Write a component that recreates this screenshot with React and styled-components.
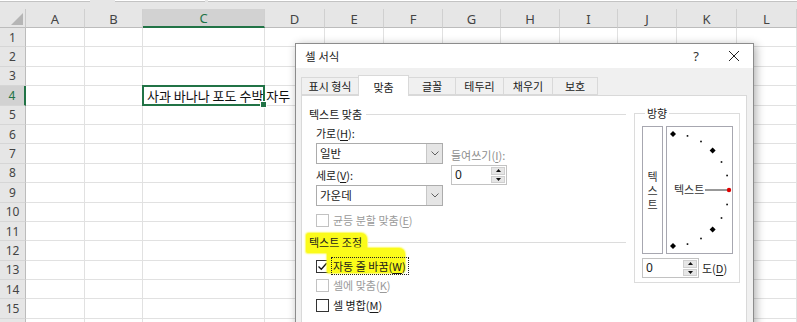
import React from 'react';
import styled, { createGlobalStyle } from 'styled-components';

const GlobalStyle = createGlobalStyle`
  html, body { margin: 0; padding: 0; background: #ffffff; }
  body { overflow: hidden; font-family: "Noto Sans CJK KR", "Noto Sans", sans-serif; }
`;

const COLUMNS = [
  { id: 'A', w: 59 }, { id: 'B', w: 58 }, { id: 'C', w: 122 }, { id: 'D', w: 60 },
  { id: 'E', w: 59 }, { id: 'F', w: 59 }, { id: 'G', w: 58 }, { id: 'H', w: 59 },
  { id: 'I', w: 58 }, { id: 'J', w: 59 }, { id: 'K', w: 60 }, { id: 'L', w: 60 },
];
const ROWS = Array.from({ length: 16 }, (_, i) => i + 1);
const ACTIVE_COL = 'C';
const ACTIVE_ROW = 4;
const GREEN = '#217346';

const Page = styled.div`
  position: relative;
  width: 797px;
  height: 322px;
  overflow: hidden;
  background: #fff;
`;

const FormulaStrip = styled.div`
  display: flex;
  height: 9px;
  background: #e6e6e6;
`;

const FormulaBox = styled.div`
  height: 1px;
  width: ${p => p.$w}px;
  margin-left: ${p => p.$ml || 0}px;
  background: #fff;
  border-bottom: 1px solid #c3c3c3;
`;

const Sheet = styled.div`
  display: grid;
  grid-template-columns: 26px ${COLUMNS.map(c => `${c.w}px`).join(' ')};
  grid-template-rows: 19px repeat(16, 19.4px);
`;

const Corner = styled.div`
  position: relative;
  box-sizing: border-box;
  background: #e6e6e6;
  border-right: 1px solid #c8c8c8;
  border-bottom: 1px solid #bcbcbc;
  &::after {
    content: '';
    position: absolute;
    right: 2px;
    bottom: 2px;
    border-left: 12px solid transparent;
    border-bottom: 12px solid #b5b5b5;
  }
`;

const ColHead = styled.div`
  box-sizing: border-box;
  display: flex;
  align-items: center;
  justify-content: center;
  background: ${p => (p.$active ? '#d2d2d2' : '#e6e6e6')};
  color: ${p => (p.$active ? GREEN : '#444')};
  border-right: 1px solid #d0d0d0;
  border-bottom: ${p => (p.$active ? `2px solid ${GREEN}` : '1px solid #bcbcbc')};
  font: 13px "Noto Sans", sans-serif;
  padding-top: 1px;
`;

const RowHead = styled.div`
  box-sizing: border-box;
  display: flex;
  align-items: center;
  justify-content: center;
  background: ${p => (p.$active ? '#d2d2d2' : '#e6e6e6')};
  color: ${p => (p.$active ? GREEN : '#444')};
  border-right: ${p => (p.$active ? `2px solid ${GREEN}` : '1px solid #bcbcbc')};
  border-bottom: 1px solid #d6d6d6;
  font: 12px "Noto Sans", sans-serif;
`;

const Cell = styled.div`
  position: relative;
  box-sizing: border-box;
  display: flex;
  align-items: center;
  border-right: 1px solid #e1e1e1;
  border-bottom: 1px solid #e1e1e1;
`;

const CellText = styled.span`
  position: relative;
  z-index: 1;
  padding-left: 4px;
  white-space: nowrap;
  font: 13px "Noto Sans CJK KR", sans-serif;
  color: #111;
`;

const Selection = styled.div`
  position: absolute;
  top: -1px;
  left: -1px;
  right: -1px;
  bottom: -1px;
  border: 2px solid ${GREEN};
  z-index: 2;
`;

const FillHandle = styled.div`
  position: absolute;
  right: -4px;
  bottom: -4px;
  width: 5px;
  height: 5px;
  background: ${GREEN};
  border: 1px solid #fff;
`;

/* ---------- dialog ---------- */

const Dialog = styled.div`
  position: absolute;
  left: 295px;
  top: 43px;
  width: 459px;
  height: 300px;
  box-sizing: border-box;
  display: flex;
  flex-direction: column;
  background: #f0f0f0;
  border: 1px solid #8c8c8c;
  box-shadow: 2px 2px 9px rgba(0, 0, 0, 0.32);
  font-family: "Noto Sans CJK KR", sans-serif;
  font-size: 11px;
  color: #1a1a1a;
  z-index: 10;
`;

const TitleBar = styled.div`
  display: flex;
  align-items: center;
  height: 24px;
  background: #fff;
  padding-left: 9px;
  padding-right: 4px;
  column-gap: 8px;
`;

const Title = styled.div`
  flex: 1;
  line-height: 16px;
  font-size: 11.5px;
  color: #222;
`;

const TitleButton = styled.div`
  width: 30px;
  height: 24px;
  display: flex;
  align-items: center;
  justify-content: center;
  font: 13px "Noto Sans", sans-serif;
  color: #333;
`;

const Body = styled.div`
  flex: 1;
  display: flex;
  flex-direction: column;
  padding: 7px 6px 0 5px;
`;

const Tabs = styled.div`
  display: flex;
  align-items: flex-end;
  height: 20px;
  position: relative;
  z-index: 1;
`;

const Tab = styled.div`
  box-sizing: border-box;
  width: ${p => p.$w}px;
  height: ${p => (p.$selected ? 21 : 18)}px;
  margin-left: ${p => (p.$first ? 0 : -1)}px;
  margin-bottom: ${p => (p.$selected ? -1 : 0)}px;
  display: flex;
  align-items: center;
  justify-content: center;
  background: ${p => (p.$selected ? '#fff' : '#f0f0f0')};
  border: 1px solid #d9d9d9;
  border-bottom: ${p => (p.$selected ? 'none' : '1px solid #d9d9d9')};
  position: relative;
  z-index: ${p => (p.$selected ? 2 : 1)};
  line-height: 16px;
  padding-top: ${p => (p.$selected ? 1 : 0)}px;
`;

const Panel = styled.div`
  flex: 1;
  display: flex;
  background: #fff;
  border: 1px solid #d9d9d9;
`;

const LeftCol = styled.div`
  width: 324px;
  box-sizing: border-box;
  padding-left: 7px;
  display: flex;
  flex-direction: column;
`;

const GroupTitle = styled.div`
  display: flex;
  align-items: center;
  height: 16px;
  margin-top: ${p => p.$mt}px;
  line-height: 16px;
  color: #1a1a1a;
`;

const GroupLine = styled.div`
  flex: 1;
  height: 1px;
  background: #dcdcdc;
  margin-left: ${p => p.$ml || 4}px;
`;

const Marker = styled.span`
  position: relative;
  z-index: 0;
  &::before {
    content: '';
    position: absolute;
    z-index: -1;
    top: ${p => p.$top}px;
    left: ${p => p.$left}px;
    right: ${p => p.$right}px;
    bottom: ${p => p.$bottom}px;
    background: #fbfb1a;
    border-radius: 3px 6px 4px 2px;
    box-shadow: 0 0 1.5px 1px rgba(250, 250, 30, 0.7);
  }
`;

const Indent = styled.div`
  padding-left: 7px;
  display: flex;
  flex-direction: column;
`;

const AlignGrid = styled.div`
  display: grid;
  grid-template-columns: 127px 56px;
  column-gap: 8px;
  margin-top: 3px;
`;

const Stack = styled.div`
  display: flex;
  flex-direction: column;
  padding-top: ${p => p.$pt || 0}px;
`;

const Label = styled.div`
  height: 16px;
  line-height: 16px;
  margin-top: ${p => p.$mt || 0}px;
  color: ${p => (p.$disabled ? '#8d8d8d' : '#1a1a1a')};
  white-space: nowrap;
`;

const Key = styled.span`
  text-decoration: underline;
  text-underline-offset: 2px;
`;

const Select = styled.div`
  box-sizing: border-box;
  height: 21px;
  margin-top: 2px;
  display: flex;
  border: 1px solid #acacac;
  background: #fff;
`;

const SelectValue = styled.div`
  flex: 1;
  padding-left: 3px;
  line-height: 18px;
  font-size: 11.5px;
`;

const SelectButton = styled.div`
  width: 15px;
  display: flex;
  align-items: center;
  justify-content: center;
  background: #e5e5e5;
  border-left: 1px solid #c7c7c7;
`;

const Spinner = styled.div`
  box-sizing: border-box;
  width: ${p => p.$w}px;
  height: 20px;
  margin-top: ${p => p.$mt || 0}px;
  display: flex;
  border: 1px solid #c2c2c2;
  background: #fff;
`;

const SpinValue = styled.div`
  flex: 1;
  padding-left: 3px;
  line-height: 18px;
  font-family: "Noto Sans", sans-serif;
  font-size: 12px;
`;

const SpinButtons = styled.div`
  width: 14px;
  display: flex;
  flex-direction: column;
  padding: 1px;
  gap: 1px;
`;

const SpinButton = styled.div`
  flex: 1;
  display: flex;
  align-items: center;
  justify-content: center;
  background: #e6e6e6;
  border: 1px solid #cfcfcf;
`;

const CheckRow = styled.div`
  display: flex;
  align-items: center;
  height: 14px;
  margin-top: ${p => p.$mt}px;
  column-gap: 4px;
  color: ${p => (p.$disabled ? '#9a9a9a' : '#1a1a1a')};
  white-space: nowrap;
  line-height: 14px;
`;

const CheckBox = styled.div`
  box-sizing: border-box;
  width: 13px;
  height: 13px;
  background: #fff;
  border: 1px solid ${p => (p.$disabled ? '#c2c2c2' : '#333')};
  display: flex;
  align-items: center;
  justify-content: center;
`;

const FocusText = styled.span`
  outline: 1px dotted #222;
  outline-offset: 0px;
  padding: 0 2px 0 1px;
  margin-left: -1px;
`;

const Orientation = styled.fieldset`
  margin: 9px 0 0 8px;
  padding: 0 0 4px 7px;
  width: 106px;
  height: 178px;
  box-sizing: border-box;
  border: 1px solid #dcdcdc;
  min-width: 0;
`;

const Legend = styled.legend`
  padding: 0 2px;
  margin-left: 3px;
  line-height: 16px;
  color: #1a1a1a;
`;

const DialRow = styled.div`
  display: flex;
  column-gap: 3px;
  margin-top: 5px;
`;

const VerticalBox = styled.div`
  box-sizing: border-box;
  width: 21px;
  height: 128px;
  border: 1px solid #a7a7b0;
  background: #fff;
  display: flex;
  align-items: center;
  justify-content: center;
  color: #333;
`;

const VerticalText = styled.span`
  writing-mode: vertical-rl;
  text-orientation: upright;
  letter-spacing: 3px;
  line-height: 14px;
  padding-top: 3px;
`;

const DialBox = styled.div`
  box-sizing: border-box;
  width: 67px;
  height: 128px;
  border: 1px solid #a7a7b0;
  background: #fff;
`;

const DegreeRow = styled.div`
  display: flex;
  align-items: center;
  margin-top: 4px;
  column-gap: 3px;
`;

const Chevron = () => (
  <svg width="8" height="5" viewBox="0 0 8 5">
    <path d="M0.5 0.5 L4 4 L7.5 0.5" fill="none" stroke="#606060" strokeWidth="1" />
  </svg>
);

const Arrow = ({ down }) => (
  <svg width="5" height="3" viewBox="0 0 5 3">
    <path d={down ? 'M0 0 L5 0 L2.5 3 Z' : 'M0 3 L5 3 L2.5 0 Z'} fill="#111" />
  </svg>
);

const SpinBox = ({ w, mt, value }) => (
  <Spinner $w={w} $mt={mt}>
    <SpinValue>{value}</SpinValue>
    <SpinButtons>
      <SpinButton><Arrow /></SpinButton>
      <SpinButton><Arrow down /></SpinButton>
    </SpinButtons>
  </Spinner>
);

const CheckMark = () => (
  <svg width="11" height="11" viewBox="0 0 11 11">
    <path d="M1.5 5.5 L4.3 8.3 L9.6 2.2" fill="none" stroke="#111" strokeWidth="1.3" />
  </svg>
);

const Dial = () => {
  const cx = 6;
  const cy = 63;
  const r = 56;
  const dots = Array.from({ length: 13 }, (_, i) => -90 + i * 15);
  return (
    <svg width="65" height="126" viewBox="0 0 65 126">
      {dots.map(a => {
        const rad = (a * Math.PI) / 180;
        const x = cx + r * Math.cos(rad);
        const y = cy + r * Math.sin(rad);
        if (a === 0) return <circle key={a} cx={x} cy={y} r="2.2" fill="#e00000" />;
        const big = Math.abs(a) === 90 || Math.abs(a) === 45;
        return big ? (
          <path key={a} d={`M${x} ${y - 3} L${x + 3} ${y} L${x} ${y + 3} L${x - 3} ${y} Z`} fill="#000" />
        ) : (
          <rect key={a} x={x - 0.8} y={y - 0.8} width="1.6" height="1.6" fill="#000" />
        );
      })}
      <line x1="38" y1={cy} x2="60" y2={cy} stroke="#333" strokeWidth="1" />
      <text x="7" y={cy + 4} fontSize="11" fill="#333" fontFamily='"Noto Sans CJK KR", sans-serif'>텍스트</text>
    </svg>
  );
};

const TABS = [
  { label: '표시 형식', w: 58 },
  { label: '맞춤', w: 51, selected: true },
  { label: '글꼴', w: 48 },
  { label: '테두리', w: 49 },
  { label: '채우기', w: 50 },
  { label: '보호', w: 46 },
];

const FormatDialog = () => (
  <Dialog>
    <TitleBar>
      <Title>셀 서식</Title>
      <TitleButton>?</TitleButton>
      <TitleButton>
        <svg width="12" height="12" viewBox="0 0 12 12">
          <path d="M1 1 L11 11 M11 1 L1 11" stroke="#222" strokeWidth="1" />
        </svg>
      </TitleButton>
    </TitleBar>
    <Body>
      <Tabs>
        {TABS.map((t, i) => (
          <Tab key={t.label} $w={t.w} $selected={t.selected} $first={i === 0}>{t.label}</Tab>
        ))}
      </Tabs>
      <Panel>
        <LeftCol>
          <GroupTitle $mt={10}>
            텍스트 맞춤
            <GroupLine />
          </GroupTitle>
          <Indent>
            <AlignGrid>
              <Stack>
                <Label>가로(<Key>H</Key>):</Label>
                <Select>
                  <SelectValue>일반</SelectValue>
                  <SelectButton><Chevron /></SelectButton>
                </Select>
                <Label $mt={3}>세로(<Key>V</Key>):</Label>
                <Select>
                  <SelectValue>가운데</SelectValue>
                  <SelectButton><Chevron /></SelectButton>
                </Select>
              </Stack>
              <Stack $pt={22}>
                <Label $disabled>들여쓰기(<Key>I</Key>):</Label>
                <SpinBox w={56} mt={2} value="0" />
              </Stack>
            </AlignGrid>
            <CheckRow $mt={7} $disabled>
              <CheckBox $disabled />
              <span>균등 분할 맞춤(<Key>E</Key>)</span>
            </CheckRow>
          </Indent>
          <GroupTitle $mt={7}>
            <Marker $top={-1} $left={-3} $right={-5} $bottom={-3}>텍스트 조정</Marker>
            <GroupLine $ml={6} />
          </GroupTitle>
          <Indent>
            <CheckRow $mt={9}>
              <CheckBox><CheckMark /></CheckBox>
              <Marker $top={-11} $left={-6} $right={3} $bottom={0}>
                <FocusText>자동 줄 바꿈(<Key>W</Key>)</FocusText>
              </Marker>
            </CheckRow>
            <CheckRow $mt={5} $disabled>
              <CheckBox $disabled />
              <span>셀에 맞춤(<Key>K</Key>)</span>
            </CheckRow>
            <CheckRow $mt={6}>
              <CheckBox />
              <span>셀 병합(<Key>M</Key>)</span>
            </CheckRow>
          </Indent>
        </LeftCol>
        <Orientation>
          <Legend>방향</Legend>
          <DialRow>
            <VerticalBox>
              <VerticalText>텍스트</VerticalText>
            </VerticalBox>
            <DialBox><Dial /></DialBox>
          </DialRow>
          <DegreeRow>
            <SpinBox w={57} value="0" />
            <span>도(<Key>D</Key>)</span>
          </DegreeRow>
        </Orientation>
      </Panel>
    </Body>
  </Dialog>
);

export default function App() {
  return (
    <Page>
      <GlobalStyle />
      <FormulaStrip>
        <FormulaBox $w={90} />
        <FormulaBox $w={90} $ml={25} />
        <FormulaBox $w={589} $ml={3} />
      </FormulaStrip>
      <Sheet>
        <Corner />
        {COLUMNS.map(c => (
          <ColHead key={c.id} $active={c.id === ACTIVE_COL}>{c.id}</ColHead>
        ))}
        {ROWS.map(r => (
          <React.Fragment key={r}>
            <RowHead $active={r === ACTIVE_ROW}>{r}</RowHead>
            {COLUMNS.map(c => {
              const active = r === ACTIVE_ROW && c.id === ACTIVE_COL;
              return (
                <Cell key={c.id}>
                  {active && (
                    <>
                      <CellText>사과 바나나 포도 수박 자두</CellText>
                      <Selection><FillHandle /></Selection>
                    </>
                  )}
                </Cell>
              );
            })}
          </React.Fragment>
        ))}
      </Sheet>
      <FormatDialog />
    </Page>
  );
}
